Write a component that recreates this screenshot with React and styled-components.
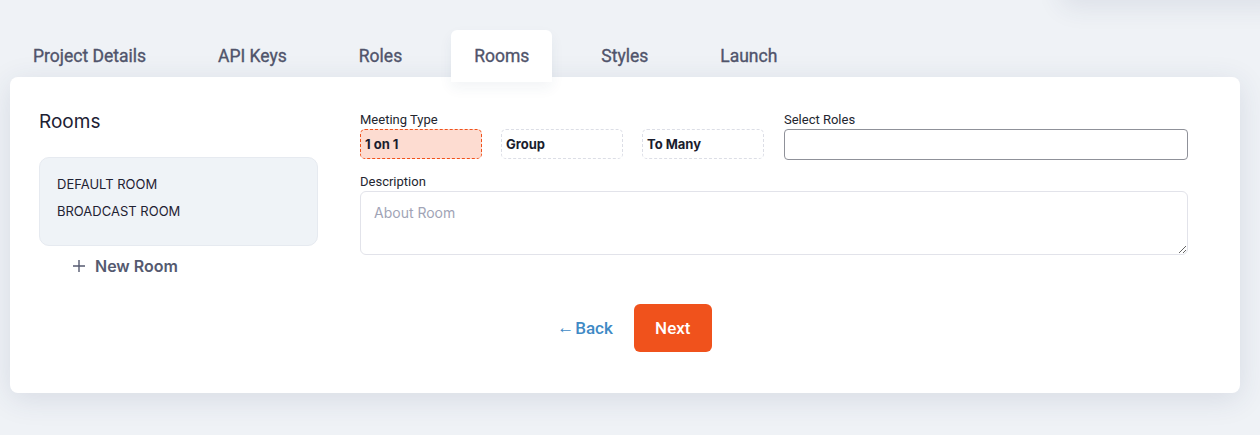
import React from "react";
import styled, { createGlobalStyle } from "styled-components";

const GlobalStyle = createGlobalStyle`
  html, body {
    margin: 0;
    padding: 0;
    background: #eff2f6;
    overflow: hidden;
  }
  * {
    box-sizing: border-box;
  }
`;

const Page = styled.div`
  position: relative;
  width: 1260px;
  height: 435px;
  padding: 30px 20px 0 10px;
  font-family: "Roboto", "Liberation Sans", sans-serif;
`;

const HeaderGhost = styled.div`
  position: absolute;
  top: -60px;
  right: -30px;
  width: 230px;
  height: 60px;
  border-radius: 12px;
  box-shadow: 0 8px 26px rgba(40, 60, 100, 0.09);
`;

const Tabs = styled.div`
  display: flex;
  gap: 26px;
  position: relative;
  z-index: 2;
  margin-bottom: -5px;
`;

const Tab = styled.div`
  padding: 15px 23px 15px;
  height: 52px;
  font-size: 17.5px;
  line-height: 22px;
  font-weight: 400;
  -webkit-text-stroke: 0.35px #50546b;
  color: #50546b;
  border-radius: 6px 6px 0 0;
  background: ${({ active }) => (active ? "#ffffff" : "transparent")};
  box-shadow: ${({ active }) =>
    active ? "0 6px 14px rgba(40, 60, 100, 0.06)" : "none"};
`;

const Card = styled.div`
  position: relative;
  z-index: 1;
  background: #fff;
  border-radius: 8px;
  box-shadow: 0 6px 30px rgba(40, 60, 100, 0.12);
  padding: 28px 29px 41px;
  display: grid;
  grid-template-columns: 279px 828px;
  column-gap: 42px;
`;

const Sidebar = styled.div`
  display: flex;
  flex-direction: column;
  padding-top: 5px;
`;

const Heading = styled.div`
  font-family: "Inter", "Liberation Sans", sans-serif;
  font-size: 19px;
  line-height: 24px;
  color: #1d2133;
  margin-bottom: 23px;
`;

const RoomList = styled.div`
  background: #eff3f7;
  border: 1px solid #e6eaf0;
  border-radius: 10px;
  padding: 13px 17px 19px;
  height: 89px;
`;

const RoomItem = styled.div`
  font-family: "Inter", "Liberation Sans", sans-serif;
  font-size: 13px;
  line-height: 27px;
  color: #1f2233;
`;

const NewRoom = styled.div`
  display: flex;
  align-items: center;
  gap: 9px;
  margin-top: 9px;
  padding-left: 33px;
  font-family: "Inter", "Liberation Sans", sans-serif;
  font-size: 16px;
  font-weight: 600;
  line-height: 22px;
  color: #555a70;
`;

const Form = styled.div`
  display: flex;
  flex-direction: column;
  padding-top: 7px;
`;

const Row = styled.div`
  display: grid;
  grid-template-columns: 1fr 1fr;
  gap: 20px;
`;

const Field = styled.div`
  display: flex;
  flex-direction: column;
  margin-top: ${({ top }) => top || 0}px;
`;

const Label = styled.label`
  font-size: 13px;
  line-height: 15px;
  color: #23262f;
  margin-bottom: 2px;
`;

const Options = styled.div`
  display: grid;
  grid-template-columns: repeat(3, 1fr);
  gap: 19px;
`;

const Option = styled.div`
  height: 30px;
  border-radius: 5px;
  border: 1px dashed ${({ active }) => (active ? "#f0521c" : "#dcdee6")};
  background: ${({ active }) => (active ? "#fddcd1" : "#fff")};
  padding: 0 4px;
  display: flex;
  align-items: center;
  font-family: "Inter", "Liberation Sans", sans-serif;
  font-size: 13px;
  font-weight: 700;
  color: #1a1d2e;
`;

const Input = styled.div`
  height: 31px;
  border: 1px solid #8f9199;
  border-radius: 4px;
  background: #fff;
`;

const TextArea = styled.textarea`
  height: 64px;
  resize: vertical;
  border: 1px solid #e2e3ea;
  border-radius: 6px;
  padding: 12px 13px;
  font-family: "Inter", "Liberation Sans", sans-serif;
  font-size: 14px;
  color: #1f2233;
  outline: none;

  &::placeholder {
    color: #a1a4b6;
  }
`;

const Footer = styled.div`
  grid-column: 1 / -1;
  display: flex;
  justify-content: center;
  align-items: center;
  gap: 21px;
  margin-top: 27px;
  padding-left: 42px;
`;

const BackLink = styled.a`
  display: flex;
  align-items: center;
  gap: 1px;
  font-size: 17px;
  font-weight: 500;
  color: #3f8ac5;
  text-decoration: none;
  cursor: pointer;

  span {
    font-size: 17px;
    font-weight: 700;
    margin-top: -1px;
  }
`;

const NextButton = styled.button`
  width: 78px;
  height: 48px;
  border: none;
  border-radius: 6px;
  background: #f0521c;
  color: #fff;
  font-family: "Roboto", "Liberation Sans", sans-serif;
  font-size: 17px;
  font-weight: 500;
  cursor: pointer;
`;

const PlusIcon = () => (
  <svg width="14" height="14" viewBox="0 0 14 14" fill="none">
    <path d="M7 1v12M1 7h12" stroke="#555a70" strokeWidth="1.4" />
  </svg>
);

const tabs = ["Project Details", "API Keys", "Roles", "Rooms", "Styles", "Launch"];
const meetingTypes = ["1 on 1", "Group", "To Many"];

export default function App() {
  return (
    <>
      <GlobalStyle />
      <Page>
        <HeaderGhost />
        <Tabs>
          {tabs.map((t) => (
            <Tab key={t} active={t === "Rooms"}>
              {t}
            </Tab>
          ))}
        </Tabs>
        <Card>
          <Sidebar>
            <Heading>Rooms</Heading>
            <RoomList>
              <RoomItem>DEFAULT ROOM</RoomItem>
              <RoomItem>BROADCAST ROOM</RoomItem>
            </RoomList>
            <NewRoom>
              <PlusIcon />
              New Room
            </NewRoom>
          </Sidebar>
          <Form>
            <Row>
              <Field>
                <Label>Meeting Type</Label>
                <Options>
                  {meetingTypes.map((m, i) => (
                    <Option key={m} active={i === 0}>
                      {m}
                    </Option>
                  ))}
                </Options>
              </Field>
              <Field>
                <Label>Select Roles</Label>
                <Input />
              </Field>
            </Row>
            <Field top={14}>
              <Label>Description</Label>
              <TextArea placeholder="About Room" />
            </Field>
          </Form>
          <Footer>
            <BackLink>
              <span>←</span>Back
            </BackLink>
            <NextButton>Next</NextButton>
          </Footer>
        </Card>
      </Page>
    </>
  );
}
